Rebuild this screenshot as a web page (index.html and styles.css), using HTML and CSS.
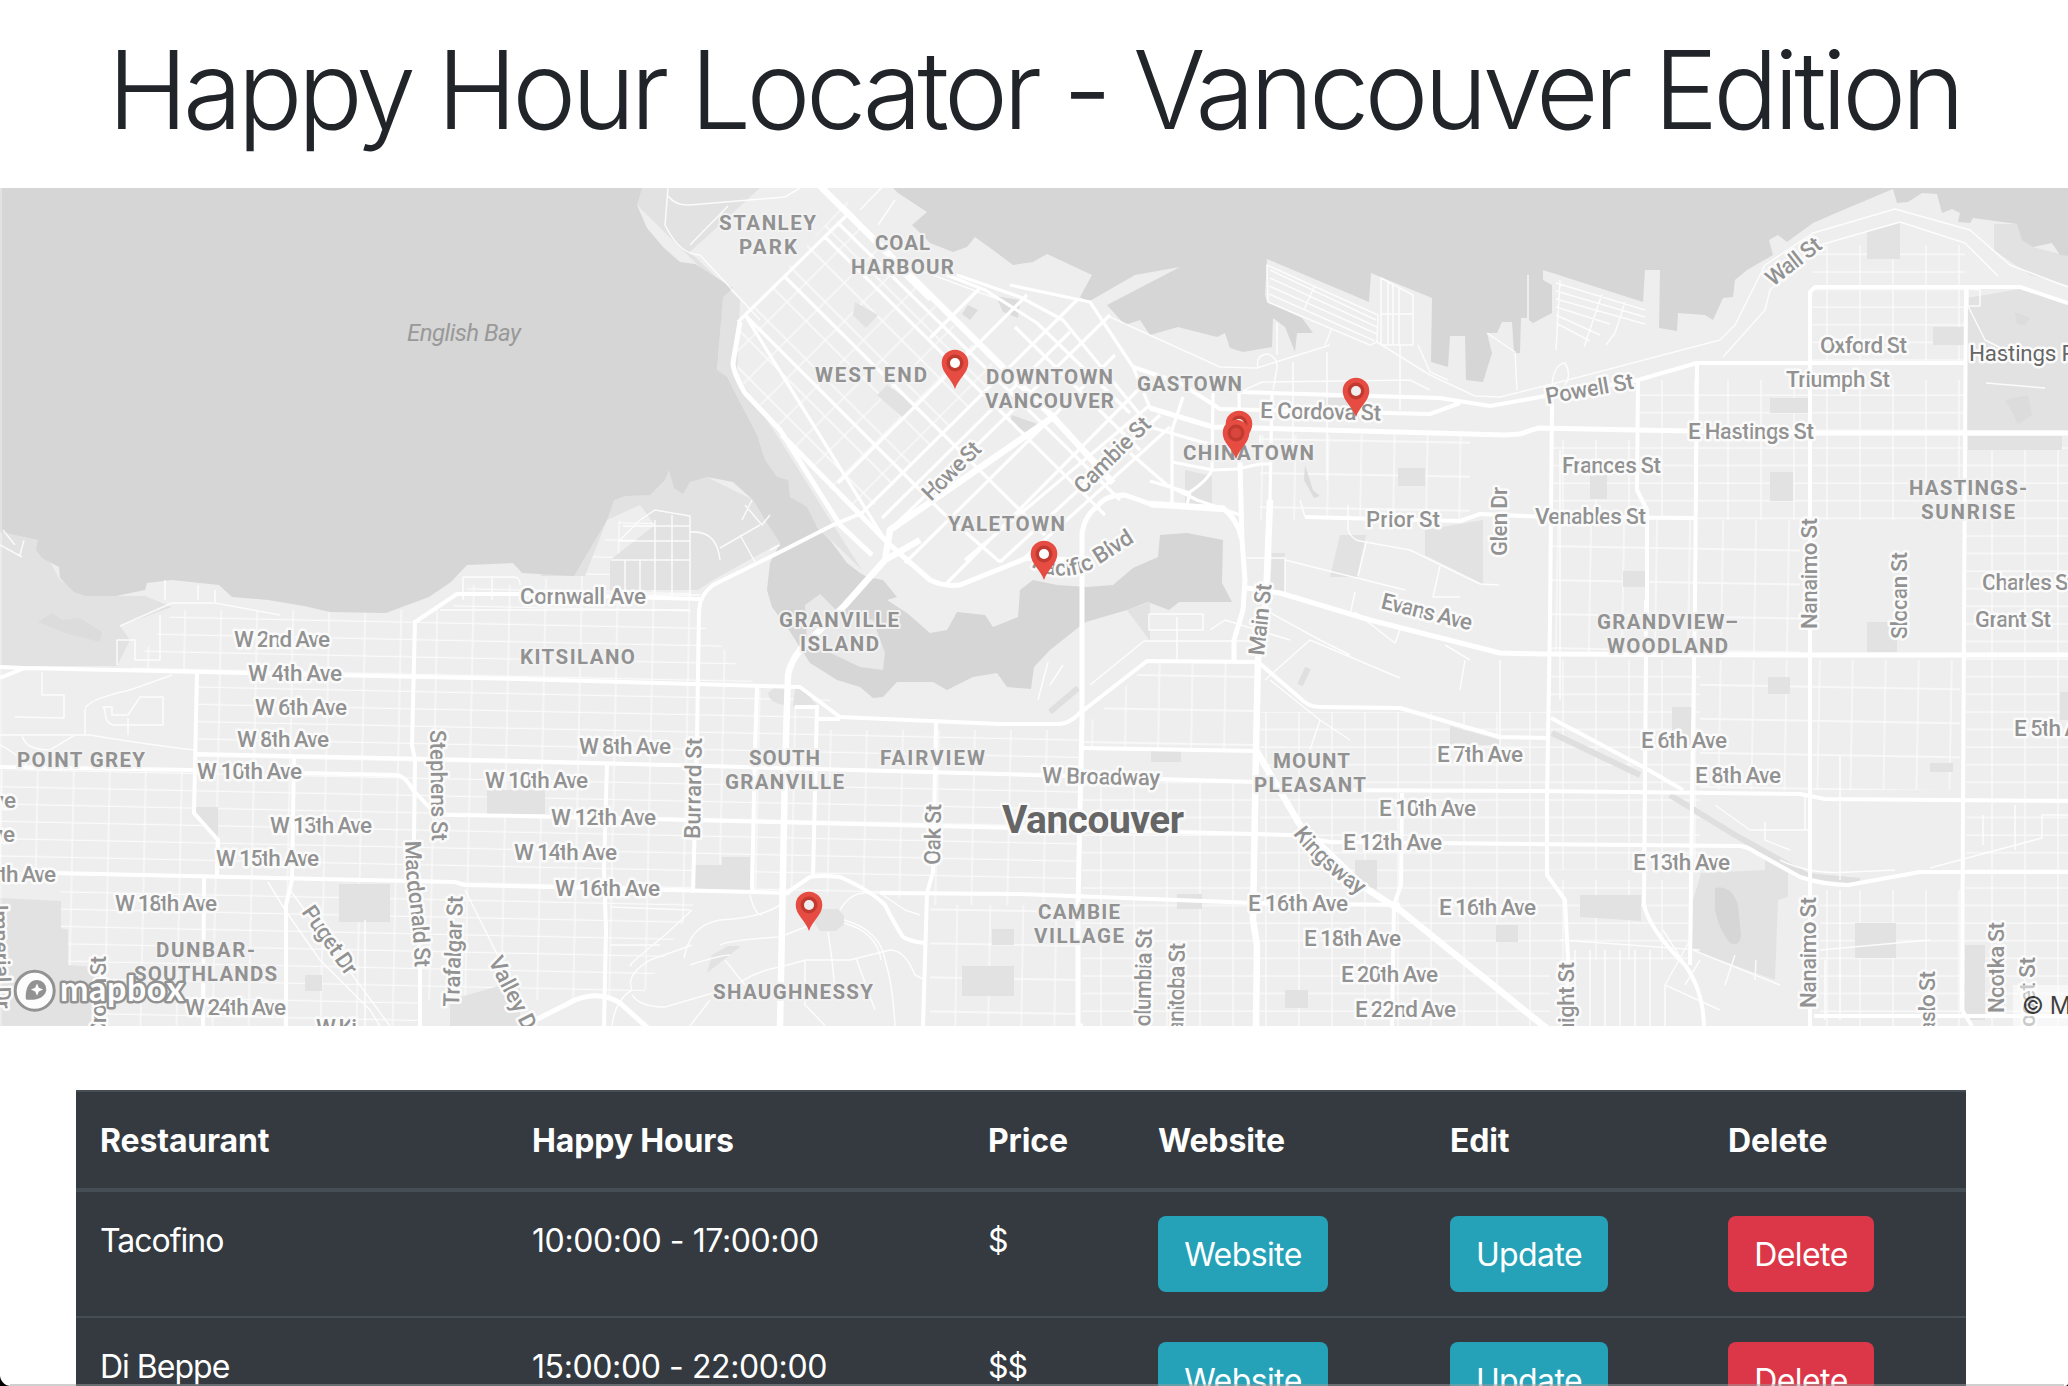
FILE: index.html
```html
<!DOCTYPE html>
<html lang="en">
<head>
<meta charset="utf-8">
<title>Happy Hour Locator - Vancouver Edition</title>
<link rel="stylesheet" href="styles.css">
</head>
<body>
<div class="window">
<header class="masthead"><h1 class="title">Happy Hour Locator - Vancouver Edition</h1></header>
<section class="map">
<svg class="map-canvas" viewBox="0 188 2068 838" width="2068" height="838" role="img" aria-label="Map of Vancouver">
<defs>
<pattern id="west" width="36" height="17.3" patternUnits="userSpaceOnUse" patternTransform="rotate(1.2)"><path class="minor" d="M0 8H36M18 0V17.3"/></pattern>
<pattern id="mid" width="33" height="34" patternUnits="userSpaceOnUse" patternTransform="rotate(1)"><path class="minor" d="M0 9H33M16 0V34"/></pattern>
<pattern id="east" width="33" height="17.6" patternUnits="userSpaceOnUse"><path class="minor" d="M0 8H33M12 0V17.6"/></pattern>
<pattern id="core" width="27" height="27" patternUnits="userSpaceOnUse" patternTransform="rotate(45)"><path class="minor" d="M0 8H27M14 0V27"/></pattern>
<g id="pin"><path d="M0 0C-3-10-13.3-16-13.3-26a13.3 13.3 0 0 1 26.6 0C13.300-16 3-10 0 0Z" fill="#e64c41"/><circle cy="-26" r="6.700" fill="none" stroke="#c03a30" stroke-width="3.400"/></g>
<path id="pacific" d="M1031 566C1045 577 1076 581 1098 565L1142 537"/>
<path id="kingsway" d="M1293 834Q1317 868 1372 904"/>
<path id="macdonald" d="M405 841L407 885Q414 925 415 975"/>
</defs>
<rect y="188" width="2068" height="838" fill="#eee"/>
<!-- residential street grids -->
<path fill="url(#west)" d="M175 610H450L470 585H530L590 560L620 520H690V610L760 690H830V730H1080V905H925L880 893H785V893H700L640 1000H420V1026H60V880H0V770H195V671H130Z"/>
<path fill="url(#mid)" d="M1082 730L1150 662H1256V750H1082ZM1260 435H1470V520H1260ZM1700 660H1960V790H1700ZM1550 520H1800V655H1550ZM930 905H1080V1026H930Z"/>
<path fill="url(#east)" d="M1082 780H1256V905H1082ZM1260 712H1550V1026H1082V905H1260ZM1550 660H1700V870H1550ZM1966 440H2068V1026H1820V890H1966ZM1640 380H1966V520H1550V440H1640ZM1812 245H1965V365H1812ZM1550 880H1690V960H1550Z"/>
<path fill="url(#core)" d="M742 320L847 200L870 240L1000 372L870 510L840 500L780 430L733 370Z"/>
<!-- parks and shore strips -->
<g fill="#e2e2e2">
<path d="M0 532L38 540 60 580 85 596H145L172 607 120 626 130 640 117 666H0ZM640 188H760L690 252 740 300 737 375 780 440 830 520 862 570 800 510 765 470 717 375 723 290 637 205ZM614 496L669 470 707 477 753 500 780 543 713 580 698 590H610V560L655 525 640 505 607 520 585 576H540Z"/>
<path d="M0 898L61 901V928L68 930V965L95 967V1026H0ZM192 807H218V840ZM487 790H545V814H487ZM339 884H390V922H339ZM305 975H322V991H305ZM450 1000L520 980V1026H450ZM695 865H722V857H750V890H695ZM855 302L878 315 866 328 853 315ZM887 385L915 405 903 418 877 395ZM962 966H1014V996H962ZM992 929H1014V945H992ZM1151 748H1181V762H1151ZM1177 894H1202V909H1177ZM1285 990H1308V1008H1285ZM1355 860H1377V890L1355 880ZM1450 726L1500 740V745H1450ZM1496 925H1518V942H1496Z"/>
<path d="M1425 530L1483 520V584L1425 555ZM1340 535H1366L1357 577H1330ZM1398 468H1425V486H1398ZM1325 398H1350V410H1325ZM1185 470L1212 476V505H1185ZM1272 553H1285V593H1270ZM1127 610L1150 602V641ZM1770 398H1808V413H1770ZM1770 472H1793V501H1770ZM1590 475H1607V499H1590ZM1867 232L1900 223V259H1867ZM1933 327H1965V345H1933ZM1967 298L2020 289 2068 305V430H1967ZM1968 436H2062V450H1968ZM1623 571H1645V587H1623ZM1768 677H1790V694H1768ZM1867 622H1897V652H1867ZM1855 923H1896V958H1855ZM1930 763H1953V772H1930ZM1580 895H1641V921L1580 917ZM1672 707H1692V745H1672ZM1965 945H1985V1020H1965ZM2060 692H2068V720H2060Z"/>
<path d="M1701 873L1765 870V860L1788 873V897L1778 900 1775 980 1692 950 1693 900ZM820 909H838L844 916V924L836 931H820L814 922ZM707 973L712 955 728 946H741ZM768 693Q775 685 788 687V705Q770 705 768 693ZM795 688L805 690 817 706H793ZM2068 256L2033 247 2017 224H1994V250L2030 275 2068 285Z"/>
</g>
<path d="M38 622L52 613 62 620 80 618 102 632 100 642 68 634ZM2015 312L2030 318 2025 325 2017 324ZM2005 400L2028 395 2032 415 2018 424 2012 412ZM1305 465L1313 490 1320 496 1314 498 1304 480ZM1012 415L1040 425 1035 437 1010 424ZM996 296L1020 300 1018 318 1003 312ZM968 305L978 310 970 320 962 314Z" fill="#dcdcdc"/>
<path d="M1552 733L1640 775M1670 795L1735 835 1808 876 1860 881M1300 685L1308 668M1050 712L1078 688" stroke="#dfdfdf" stroke-width="6" fill="none"/>
<!-- water -->
<g fill="#d6d6d6">
<path d="M0 188H642L637 205 647 228 663 247 680 262 695 264 733 288 723 297 717 370 727 377 735 393 757 435 765 460 777 477 788 480 790 497 807 507 817 527 830 540 847 563 860 573 867 577 883 580 897 597 887 600 907 613 930 633 947 630 957 612 985 615 993 627 1018 617 1020 590 1033 580 1057 585 1087 587 1113 585 1133 568 1158 557 1160 535 1187 533 1223 540 1222 583 1232 602 1179 602 1169 610 1148 602 1127 610 1086 622 1079 627 1050 650 1034 667 1031 689 1007 687 997 673 973 677 947 690 933 682 897 682 883 697 873 698 860 687 837 680 810 663 787 627 772 607 767 590 770 563 780 543 767 523 753 500 733 482 707 477 690 482 683 494 674 488 669 470 665 480 650 495 625 496 614 500 607 520 574 576 522 573 513 563 467 565 451 582 429 597 386 613 330 612 304 606 268 600 232 597 219 585 172 580 147 583 145 590 116 596H85L74 592 60 578 59 567 42 558 36 550 38 540 0 532Z"/>
<path d="M893 188L898 193 927 212 912 225 930 243 953 252 967 247 975 237 997 253 1013 265 1033 262 1047 254 1092 275 1080 297 1088 302 1135 275 1180 267 1107 305 1125 325 1140 320 1150 335 1178 327 1217 337 1225 333 1230 348 1243 352 1272 347 1273 318 1285 327 1295 352 1297 333 1313 333 1302 318 1267 302 1265 295 1267 259 1369 302 1371 273 1432 298 1431 362 1448 367 1450 336H1465L1466 380 1483 382 1492 353 1487 333H1497L1502 322H1512L1514 353 1520 353 1521 318H1527V275H1529V320L1533 323 1552 313V285L1543 280V270L1643 302 1645 270H1660L1659 328 1677 331 1678 313 1705 315 1713 320 1723 298 1733 297 1735 280 1747 270 1773 255 1769 240 1778 235 1787 242 1813 223 1843 210 1893 189 1897 203 1908 202 1922 193 1937 194 1942 213 1952 209 1960 213 1958 222 1970 223 1973 218 2017 224 2022 240 2033 247 2052 243 2060 255 2068 256V188Z"/>
<path d="M1715 888Q1732 885 1738 905L1741 935Q1740 947 1730 943 1719 930 1715 910Z"/>
</g>
<path fill="#e9e9e9" d="M807 643L805 605 820 594 840 614 873 620 885 653 883 670 860 667 835 655Z"/>
<rect y="188" width="2" height="838" fill="#fff" opacity=".3"/>
<!-- local roads -->
<g class="local">
<path d="M668 188L665 225Q680 255 700 255L760 320M668 196Q676 206 690 205L785 197 800 188M690 245L728 206M860 210L885 184M895 200Q880 222 878 225M887 258L1000 300M1267 265L1378 315 1377 342 1370 345 1268 302ZM1270 270L1376 320M1270 278L1377 327M1269 286L1377 334M1269 294L1375 341M1314 287L1304 310M1381 278V345H1413V295ZM1388 282V345M1393 285V345M1399 288V345M1380 314H1413M1556 283L1645 310M1556 291L1645 317M1556 299L1645 324M1556 307L1610 324M1556 315L1600 335M1556 323L1590 341M1560 280L1556 350M1602 294L1584 347M1625 302L1615 333 1606 345"/>
<path d="M1110 317L1220 367 1257 368 1330 345M1377 342L1430 375 1475 396 1500 397 1560 382 1720 340 1735 325 1765 265 1813 233 1895 209 1970 230 2010 265 2068 287M1723 357L1765 310 1770 290 1820 245 1900 222 1965 243 1998 276M1240 392L1262 382 1410 380 1430 390M1325 345L1332 328M1293 362V460M1327 352V480M1258 368Q1255 355 1268 354 1278 358 1277 368L1273 390M1277 323V355M1400 345V410M1418 345L1430 372 1448 380M1487 333L1515 352 1517 390M1552 400Q1550 365 1565 363 1572 375 1565 385M1960 288L1980 290V306H1968V290M1968 306L1985 340 2005 350M1986 383L2045 388"/>
<path d="M1260 435V460M1285 560L1405 590M1286 595L1370 620M1348 505V530Q1352 540 1360 541L1410 550 1480 584 1499 585M1366 543L1358 576M1440 566L1433 597 1460 597M1355 592L1350 615M1247 558H1285V595M1300 500L1305 517M1149 614H1203V630H1149ZM1177 617V660M1210 630L1225 620 1290 640M1265 610L1320 640 1350 655M1265 680L1310 640 1400 678M1270 680L1320 720 1310 750M1320 720L1350 740M1355 612L1395 643 1400 630M1445 645L1470 660M1460 690L1465 660M1500 660V760M1560 450V700M1144 641L1090 685M1144 641H1258M1048 662L1038 700M1063 665L1050 685"/>
<path d="M620 540L640 520 655 510 690 516V600M623 526H690M618 541H690M611 560H690M625 560V600M640 560V600M655 520V600M672 515V600M720 560Q717 530 690 532M720 548L760 525M740 535L755 562M770 550L780 545M745 505L762 525 770 515M752 500L742 520M625 595H700M440 610H690M463 577V600M492 577V600M463 577H515Q520 578 520 585M120 626L172 603H215L280 615M165 580V600M198 585V600M215 590V602M0 545L22 557M3 530L15 545M24 540L20 555"/>
<path d="M0 735H90Q150 745 195 750M42 672V695H64V718L15 717M85 735V710Q85 700 130 690L172 675M105 710Q105 725 115 725H163V697H140L128 715H112V707H103ZM128 735V718M0 745Q20 755 30 770M22 735Q25 750 50 750L75 735M268 882L285 910 320 960 370 1010 380 1026M290 890L345 965 390 1026M465 890L500 960 510 990M365 920V1026M160 615V660H135V640H117V665"/>
<path d="M844 920Q880 930 885 960 893 985 895 1026M844 923Q877 932 881 960M690 965Q720 955 730 955M720 945Q730 940 780 937L808 926M684 958Q690 925 720 920 760 918 780 905M750 895Q755 915 762 915M840 910Q850 893 865 893L900 893M805 960V1005Q820 1020 825 1026M828 932L832 960 836 1000M740 982Q760 970 780 967L806 960H850L890 950Q905 950 915 975L925 980M856 958L875 1010M725 960L745 985M632 995Q640 1007 665 1007L740 985M632 990 Q625 975 650 960L692 945M632 965Q622 970 665 935L692 910M710 1000L690 1026M880 893L905 910 920 915M610 907L690 910M610 945H660M612 1026Q615 1000 632 990"/>
<path d="M1693 950L1780 985M1690 940L1665 985 1720 1010M1735 955L1725 985M1756 960L1755 980M1700 960L1685 985M1663 930L1685 965M1840 755V880M1780 860Q1810 875 1850 872L1895 870M1765 822V840L1790 850M1715 805L1750 830H1808M1805 795V830M1930 868L2042 838V815H2068M2015 805V850M1983 815V845M1560 940L1700 950M1820 950L1930 940M1825 960V1020M1840 890V1020M1575 950V1026M1590 950V1026M1605 950V1026M1620 950V1026M1635 950V1026M1650 950V1026M1665 985V1026"/>
</g>
<!-- arterials -->
<g class="road">
<path d="M0 678L25 668 160 671 330 675 520 679 800 687 840 717 1000 724H1060Q1070 723 1080 713L1147 661 1258 662 1300 698Q1308 707 1320 707L1400 708 1500 737 1548 738M0 667L25 668M0 767L195 770M300 773L397 775Q405 776 413 790L430 808Q440 815 450 815L520 816 1020 828 1255 834 1290 835 1330 842 1740 846Q1748 847 1755 852L1800 877Q1825 885 1848 885L1920 872H2068"/>
<path d="M195 754L520 761 1000 774 1255 782M1300 790L1540 791 1800 794 1825 799 2068 801M55 873L455 882 465 885 790 893M880 893L1020 894 1255 903 1400 905M785 894L810 877Q820 875 840 877 870 890 885 905 895 925 903 937 912 942 925 943"/>
<path d="M197 671L194 813 218 840 217 875M204 878L203 1026M294 755L292 880 286 905V1026M415 622L457 594 520 594 700 599M415 620L412 745 415 760 414 840 420 970V1026M607 763L604 870 606 930 604 1026M862 513L833 525 780 552 713 585Q700 595 699 610L697 740 693 893M817 705L813 877M757 687L755 750 752 893M936 723L933 872 927 893 923 1026"/>
<path d="M1082 748L1256 751M1402 793L1401 885 1394 905 1392 1026M1697 363L1695 600 1692 800 1690 965M1646 600V657L1644 905Q1650 930 1685 965 1703 990 1704 1026M1638 378L1637 490 1647 510V620M1810 1026V292L1815 287H2020L2068 303M1966 288L1964 620 1962 1010 1972 1026M1638 380L1697 363H1965M1238 392L1440 398 1490 406 1540 397 1638 380M1133 367L1180 383 1220 409 1430 414 1460 403M1305 517L1460 521 1480 514 1545 517 1697 518M1552 403L1550 620 1547 800V875L1565 900 1568 960 1566 1026M1551 718L1645 768 1683 790M1814 1016H2068M817 707H795M817 719H840"/>
</g>
<g class="downtown">
<path d="M745 315L883 537 M745 315L883 453 942 512 1000 562M785 277L942 433 1045 535M825 237L1105 515M837 222L1120 500M930 243M1015 327L1140 450M887 258L930 300M957 275L1020 297 1063 320 1150 427M847 215L738 322M947 275L985 290 1037 323 1130 413M1010 285L1090 302 1133 367 1150 408 1213 427"/>
<path d="M838 483L1027 295M862 513L1077 300M882 518L1070 332M890 530L1110 315M905 563L1115 355M945 585L1140 388M965 560L1150 405M1000 562L1160 415M1020 562L1170 427M930 338L980 288"/>
<path d="M1150 427L1212 445M1172 462L1213 470 1237 469 1260 464H1272M1213 393L1212 470Q1208 480 1190 492L1187 505M1239 393L1240 463M1272 393L1270 500M1183 397L1172 430V505M1130 453L1167 485 1197 500 1240 515M1150 481L1190 493"/>
</g>
<g class="arterial">
<path d="M740 322L733 363Q733 372 745 393L780 430 840 525 872 555M782 435L890 545 930 580Q945 587 960 585L1027 558 1083 560M1083 1026L1078 1026 1078 905 1082 720V533Q1085 515 1098 506 1105 495 1125 495L1153 505 1223 508Q1238 520 1242 540L1245 580 1243 610 1234 640V662M1240 463L1242 540M1150 408L1213 427 1505 435 1520 434 1538 428 1636 430 1810 433H2068M1247 588L1280 593 1370 620 1500 653 1540 654 1800 655H2068M520 1028L575 1000Q600 990 620 1003L650 1030"/>
</g>
<g class="highway">
<path d="M820 186L1053 417M1053 417L1113 483M1053 417L890 530 885 560 845 605 800 650Q790 663 788 675L785 770 780 1028M1270 500L1266 600 1258 660 1256 750 1253 920 1257 945 1256 1028M1256 750L1300 825 1365 888 1400 910 1540 1023 1575 1050M885 560L920 540M1150 504L1225 509"/>
</g>
<!-- street names -->
<g class="street">
<text x="520" y="604" textLength="126">Cornwall Ave</text>
<text x="234" y="647" textLength="96">W 2nd Ave</text><text x="248" y="681" textLength="94">W 4th Ave</text><text x="255" y="715" textLength="92">W 6th Ave</text><text x="237" y="747" textLength="92">W 8th Ave</text><text x="197" y="779" textLength="105">W 10th Ave</text><text x="270" y="833" textLength="102">W 13th Ave</text><text x="216" y="866" textLength="103">W 15th Ave</text><text x="115" y="911" textLength="102">W 18th Ave</text><text x="185" y="1015" textLength="101">W 24th Ave</text>
<text x="0" y="808" textLength="16">ve</text><text x="-1" y="842" textLength="16">ve</text><text x="0" y="882" textLength="56">th Ave</text><text x="316" y="1035" textLength="41">W Ki</text>
<text x="579" y="754" textLength="92">W 8th Ave</text><text x="485" y="788" textLength="103">W 10th Ave</text><text x="551" y="825" textLength="105">W 12th Ave</text><text x="514" y="860" textLength="103">W 14th Ave</text><text x="555" y="896" textLength="105">W 16th Ave</text>
<text transform="translate(1042 783) rotate(1.2)" textLength="118">W Broadway</text><text transform="translate(1260 418) rotate(1.2)" textLength="121">E Cordova St</text><text x="1366" y="527" textLength="74">Prior St</text>
<text x="1562" y="473" textLength="99">Frances St</text><text x="1535" y="524" textLength="111">Venables St</text><text x="1820" y="353" textLength="87">Oxford St</text><text x="1786" y="387" textLength="104">Triumph St</text><text x="1688" y="439" textLength="126">E Hastings St</text><text x="1982" y="590" textLength="93">Charles St</text><text x="1975" y="627" textLength="76">Grant St</text>
<text x="2014" y="736" textLength="86">E 5th Ave</text><text x="1641" y="748" textLength="86">E 6th Ave</text><text x="1695" y="783" textLength="86">E 8th Ave</text><text x="1633" y="870" textLength="97">E 13th Ave</text><text x="1437" y="762" textLength="86">E 7th Ave</text><text x="1379" y="816" textLength="97">E 10th Ave</text><text x="1343" y="850" textLength="99">E 12th Ave</text><text x="1248" y="911" textLength="100">E 16th Ave</text><text x="1439" y="915" textLength="97">E 16th Ave</text><text x="1304" y="946" textLength="97">E 18th Ave</text><text x="1341" y="982" textLength="97">E 20th Ave</text><text x="1355" y="1017" textLength="101">E 22nd Ave</text>
<text transform="translate(931 502) rotate(-45)" textLength="73">Howe St</text><text transform="translate(1083 495) rotate(-45)" textLength="98">Cambie St</text><text transform="translate(1380 608) rotate(14)" textLength="93">Evans Ave</text><text transform="translate(1547 404) rotate(-10)" textLength="89">Powell St</text><text transform="translate(1773 287) rotate(-38)" textLength="64">Wall St</text>
<text transform="translate(1507 556) rotate(-90)" textLength="69">Glen Dr</text><text transform="translate(1264 656) rotate(-84)" textLength="72">Main St</text><text transform="translate(1817 629) rotate(-90)" textLength="111">Nanaimo St</text><text transform="translate(1907 639) rotate(-90)" textLength="87">Slocan St</text><text transform="translate(1816 1008) rotate(-90)" textLength="111">Nanaimo St</text><text transform="translate(2004 1013) rotate(-90)" textLength="91">Nootka St</text><text transform="translate(2035 1055) rotate(-90)" textLength="98">Lillooet St</text><text transform="translate(1935 1046) rotate(-90)" textLength="75">Kaslo St</text><text transform="translate(1574 1048) rotate(-90)" textLength="86">Knight St</text><text transform="translate(1150 1040) rotate(-89)" textLength="111">Columbia St</text><text transform="translate(1183 1051) rotate(-89)" textLength="108">Manitoba St</text><text transform="translate(700 839) rotate(-89)" textLength="101">Burrard St</text><text transform="translate(940 865) rotate(-89)" textLength="61">Oak St</text>
<text transform="translate(430 730) rotate(89)" textLength="111">Stephens St</text><text transform="translate(459 1007) rotate(-88)" textLength="111">Trafalgar St</text><text transform="translate(301 912) rotate(55)" textLength="79">Puget Dr</text><text transform="translate(488 961) rotate(63)" textLength="87">Valley Dr</text><text transform="translate(106 1036) rotate(-90)" textLength="80">Crown St</text><text transform="translate(-8 905) rotate(88)" textLength="104">Imperial Dr</text>
<text><textPath href="#pacific" textLength="115">Pacific Blvd</textPath></text><text><textPath href="#kingsway" textLength="91">Kingsway</textPath></text><text><textPath href="#macdonald" textLength="127">Macdonald St</textPath></text>
<text class="place" x="1969" y="361" textLength="137">Hastings Park</text>
</g>
<!-- neighbourhoods -->
<g class="hood">
<text x="719" y="230" textLength="97">STANLEY</text><text x="739" y="254" textLength="58">PARK</text><text x="875" y="250" textLength="55">COAL</text><text x="851" y="274" textLength="103">HARBOUR</text><text x="815" y="382" textLength="112">WEST END</text><text x="986" y="384" textLength="127">DOWNTOWN</text><text x="985" y="408" textLength="129">VANCOUVER</text><text x="948" y="531" textLength="117">YALETOWN</text><text x="1137" y="391" textLength="105">GASTOWN</text><text x="1183" y="460" textLength="131">CHINATOWN</text>
<text x="1909" y="495" textLength="118">HASTINGS-</text><text x="1921" y="519" textLength="94">SUNRISE</text><text x="1597" y="629" textLength="141">GRANDVIEW–</text><text x="1607" y="653" textLength="121">WOODLAND</text><text x="1273" y="768" textLength="77">MOUNT</text><text x="1254" y="792" textLength="112">PLEASANT</text><text x="1038" y="919" textLength="82">CAMBIE</text><text x="1034" y="943" textLength="90">VILLAGE</text>
<text x="520" y="664" textLength="115">KITSILANO</text><text x="749" y="765" textLength="71">SOUTH</text><text x="725" y="789" textLength="119">GRANVILLE</text><text x="880" y="765" textLength="105">FAIRVIEW</text><text x="779" y="627" textLength="120">GRANVILLE</text><text x="800" y="651" textLength="79">ISLAND</text><text x="713" y="999" textLength="160">SHAUGHNESSY</text><text x="17" y="767" textLength="128">POINT GREY</text><text x="156" y="957" textLength="99">DUNBAR-</text><text x="134" y="981" textLength="143">SOUTHLANDS</text>
</g>
<text class="bay" x="407" y="341" textLength="114">English Bay</text>
<text class="city" x="1002" y="833" textLength="182">Vancouver</text>
<!-- restaurants -->
<use href="#pin" x="955" y="389"/><circle cx="955" cy="363" r="5" fill="#fff"/>
<use href="#pin" x="1044" y="580"/><circle cx="1044" cy="554" r="5" fill="#fff"/>
<use href="#pin" x="1356" y="417"/><circle cx="1356" cy="391" r="5" fill="#eee"/>
<use href="#pin" x="1239" y="450"/><circle cx="1239" cy="424" r="5" fill="#eee"/>
<use href="#pin" x="1236" y="459"/><circle cx="1236" cy="433" r="5" fill="#d9463b"/>
<use href="#pin" x="809" y="931"/><circle cx="809" cy="905" r="5" fill="#eee"/>
<!-- map provider mark -->
<g><circle cx="34.700" cy="990.700" r="19.500" fill="#fff" fill-opacity=".9" stroke="#929292" stroke-width="3"/><path d="M26 999.500C25 991 28 980 37 980a9.300 9.300 0 0 1 9.300 10c-1 8-11 11-20.300 9.500Z" fill="#929292"/><path d="M37 983.500l1.800 4.300 4.300 1.800-4.300 1.800-1.800 4.300-1.800-4.300-4.300-1.800 4.300-1.800Z" fill="#fff"/><text class="logo" x="60" y="1001" textLength="124">mapbox</text></g>
</svg>
<div class="attribution">© Mapbox © OpenStreetMap</div>
</section>
<main class="listing">
<table class="table">
<colgroup><col class="c-name"><col class="c-hours"><col class="c-price"><col class="c-site"><col class="c-edit"><col class="c-delete"></colgroup>
<thead><tr><th>Restaurant</th><th>Happy Hours</th><th>Price</th><th>Website</th><th>Edit</th><th>Delete</th></tr></thead>
<tbody>
<tr><td>Tacofino</td><td class="hours">10:00:00 - 17:00:00</td><td>$</td><td><a class="btn btn-info site">Website</a></td><td><a class="btn btn-info edit">Update</a></td><td><a class="btn btn-danger">Delete</a></td></tr>
<tr><td>Di Beppe</td><td class="hours">15:00:00 - 22:00:00</td><td>$$</td><td><a class="btn btn-info site">Website</a></td><td><a class="btn btn-info edit">Update</a></td><td><a class="btn btn-danger">Delete</a></td></tr>
</tbody>
</table>
</main>
<div class="edge"></div>
</div>
</body>
</html>
```
FILE: styles.css
```css
*{box-sizing:border-box}
html,body{margin:0;height:1386px;overflow:hidden;background:#000}
body{font-family:Inter,"Liberation Sans",sans-serif;color:#212529}
.window{position:relative;width:2068px;height:1386px;overflow:hidden;background:#fff;border-radius:0 0 3px 11px}
.masthead{height:188px;display:flex;justify-content:center;padding-top:23px}
.title{margin:0;font-size:108px;font-weight:330;line-height:134px;letter-spacing:-4.7px;white-space:nowrap}
.map{position:relative;height:838px;overflow:hidden}
.map-canvas{display:block}
.map-canvas path{stroke-linejoin:round}
.minor{stroke:#fff;stroke-width:1.3;fill:none;opacity:.75}
.local{stroke:#fff;stroke-width:1.5;fill:none;opacity:.85}
.road{stroke:#fff;stroke-width:4;fill:none}
.downtown{stroke:#fff;stroke-width:3.2;fill:none}
.arterial{stroke:#fff;stroke-width:5;fill:none}
.highway{stroke:#fff;stroke-width:6.5;fill:none}
.street,.hood,.city,.bay{font-family:Roboto,"Liberation Sans",sans-serif;fill:#929292;paint-order:stroke;stroke-linejoin:round}
.street{font-size:22.5px;font-weight:500;stroke:#fbfbfb;stroke-width:5px}
.street .place{fill:#666;font-weight:400}
.hood{font-size:20.5px;font-weight:700;stroke:#f2f2f2;stroke-width:4px}
.bay{font-size:24px;font-style:italic;fill:#999}
.city{font-size:39px;font-weight:700;fill:#666;stroke:#fafafa;stroke-width:5px}
.logo{font-family:Lato,sans-serif;font-size:34px;font-weight:700;fill:#fff;stroke:#929292;stroke-width:5px;paint-order:stroke;stroke-linejoin:round}
.attribution{position:absolute;left:2013px;bottom:0;height:41px;padding-left:9px;background:rgba(255,255,255,.5);font-size:24px;line-height:42px;letter-spacing:-.5px;color:rgba(0,0,0,.75);white-space:nowrap}
.listing{padding:64px 0 0 76px}
.table{width:1890px;table-layout:fixed;border-collapse:separate;border-spacing:0;background:#343a40;color:#fff;font-size:32px;line-height:48px}
.c-name{width:432px}.c-hours{width:456px}.c-price{width:170px}.c-site{width:292px}.c-edit{width:278px}.c-delete{width:262px}
th,td{padding:25px 24px 23px;text-align:left;vertical-align:top;border-top:2px solid #454d55;white-space:nowrap}
th{height:102px;font-weight:700;font-size:32px;letter-spacing:-.15px;border-bottom:4px solid #454d55}
td{height:126px;font-size:32px;letter-spacing:-1px}
.hours{letter-spacing:-.4px}
tbody tr:first-child td{border-top:0;height:124px}
.btn{display:flex;justify-content:center;align-items:center;width:146px;height:76px;margin-top:-1px;padding-top:1px;border-radius:8px;color:#fff;letter-spacing:-.6px}
.btn-info{background:#25a2b8}
.btn-danger{background:#dc3748}
.site{width:170px}.edit{width:158px}
.edge{position:absolute;left:10px;right:4px;bottom:0;height:2px;background:rgba(160,160,160,.5)}
```
